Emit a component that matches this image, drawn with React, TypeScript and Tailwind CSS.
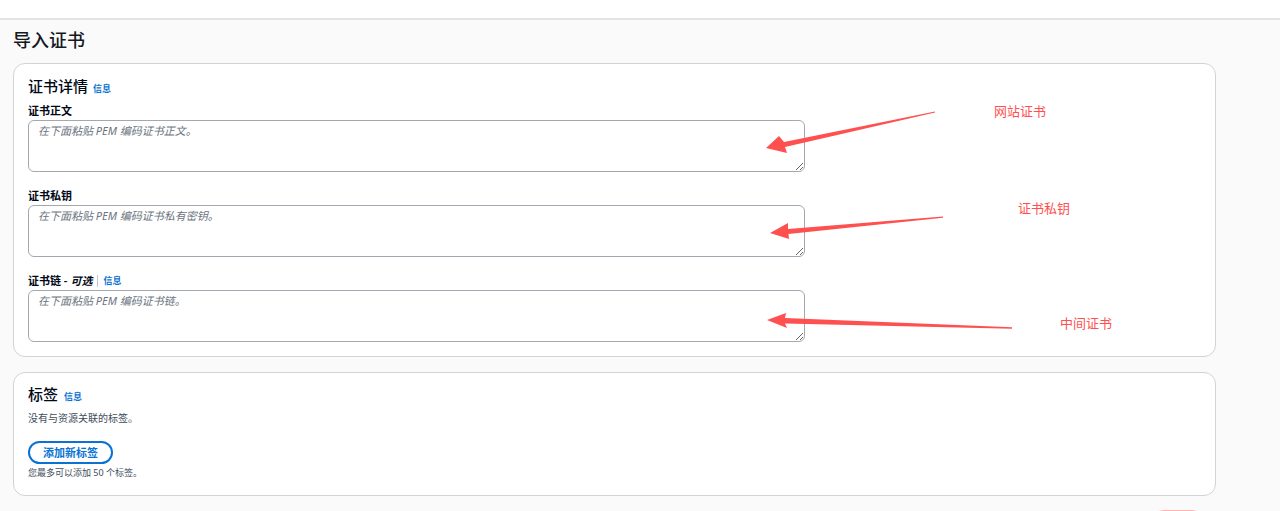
import React from 'react';

const font = { fontFamily: '"Noto Sans", "Noto Sans CJK SC", sans-serif' };

function InfoLink({ className = '' }: { className?: string }) {
  return <a className={`text-[9px] font-bold text-[#0972d3] ${className}`}>信息</a>;
}

function PemField({ label, placeholder }: { label: React.ReactNode; placeholder: string }) {
  return (
    <div className="flex flex-col">
      <div className="h-4 flex items-center text-[11px] font-semibold text-[#000716] leading-4 mt-[2px] mb-[1px]">{label}</div>
      <textarea
        placeholder={placeholder}
        className="w-[777px] h-[52px] bg-white border border-[#a3a8b0] rounded-[6px] px-[9px] pt-[3px] text-[11px] leading-[14px] italic placeholder:text-[#6b7480] outline-none resize-y"
        style={font}
      />
    </div>
  );
}

function Arrows() {
  return (
    <svg className="absolute inset-0 pointer-events-none" width="1280" height="511" viewBox="0 0 1280 511">
      <g fill="#ff5050">
        <polygon points="935,111.4 784,142 779,136 766,148 787,153 785,147 935,112.6" />
        <polygon points="943,216.4 788,229 788,223 770,233 789,239 788.5,234 943,217.8" />
        <polygon points="1012,327.2 785,318 786,313 767,320 787,328 785,323.5 1012,328.8" />
      </g>
    </svg>
  );
}

export default function App() {
  return (
    <div className="relative w-[1280px] h-[511px] overflow-hidden bg-[#fafafa]" style={font}>
      <div className="h-[20px] bg-white border-b-2 border-[#e3e3e6]" />
      <div className="pl-[13px] w-[1216px]">
        <h1 className="pt-[8px] h-[32px] text-[18px] leading-[24px] font-medium text-[#16191f]">导入证书</h1>

        <section className="mt-[11px] bg-white border border-[#d1d3d6] rounded-[12px] px-[14px] pt-[12px] pb-[14px]">
          <div className="flex items-baseline h-5 leading-5">
            <h2 className="text-[15px] font-medium text-[#000716]">证书详情</h2>
            <InfoLink className="ml-[5px]" />
          </div>
          <div className="mt-[5px] flex flex-col gap-[14px]">
            <PemField label="证书正文" placeholder="在下面粘贴 PEM 编码证书正文。" />
            <PemField label="证书私钥" placeholder="在下面粘贴 PEM 编码证书私有密钥。" />
            <PemField
              label={
                <>
                  <span>证书链 - </span>
                  <span className="italic ml-[3px]">可选</span>
                  <span className="mx-[5px] h-[12px] w-px bg-[#c6c6cd]" />
                  <InfoLink />
                </>
              }
              placeholder="在下面粘贴 PEM 编码证书链。"
            />
          </div>
        </section>

        <section className="mt-[15px] bg-white border border-[#d1d3d6] rounded-[12px] px-[14px] pt-[11px] pb-[16px]">
          <div className="flex items-baseline h-5 leading-5">
            <h2 className="text-[15px] font-medium text-[#000716]">标签</h2>
            <InfoLink className="ml-[6px]" />
          </div>
          <p className="mt-[6px] text-[10px] leading-4 text-[#414d5c]">没有与资源关联的标签。</p>
          <button className="mt-[15px] h-[23px] w-[85px] rounded-full border-2 border-[#0972d3] text-[11px] font-semibold text-[#0972d3] leading-none">
            添加新标签
          </button>
          <p className="mt-[3px] text-[9px] leading-3 text-[#414d5c]">您最多可以添加 50 个标签。</p>
        </section>

        <div className="mt-[14px] flex justify-end pr-[8px]">
          <button className="h-8 w-[60px] rounded-full border border-[#ffb3b3] bg-white" />
        </div>
      </div>

      <Arrows />
      <span className="absolute left-[994px] top-[102px] text-[13px] leading-[18px] text-[#ff5050]">网站证书</span>
      <span className="absolute left-[1018px] top-[199px] text-[13px] leading-[18px] text-[#ff5050]">证书私钥</span>
      <span className="absolute left-[1060px] top-[314px] text-[13px] leading-[18px] text-[#ff5050]">中间证书</span>
    </div>
  );
}
